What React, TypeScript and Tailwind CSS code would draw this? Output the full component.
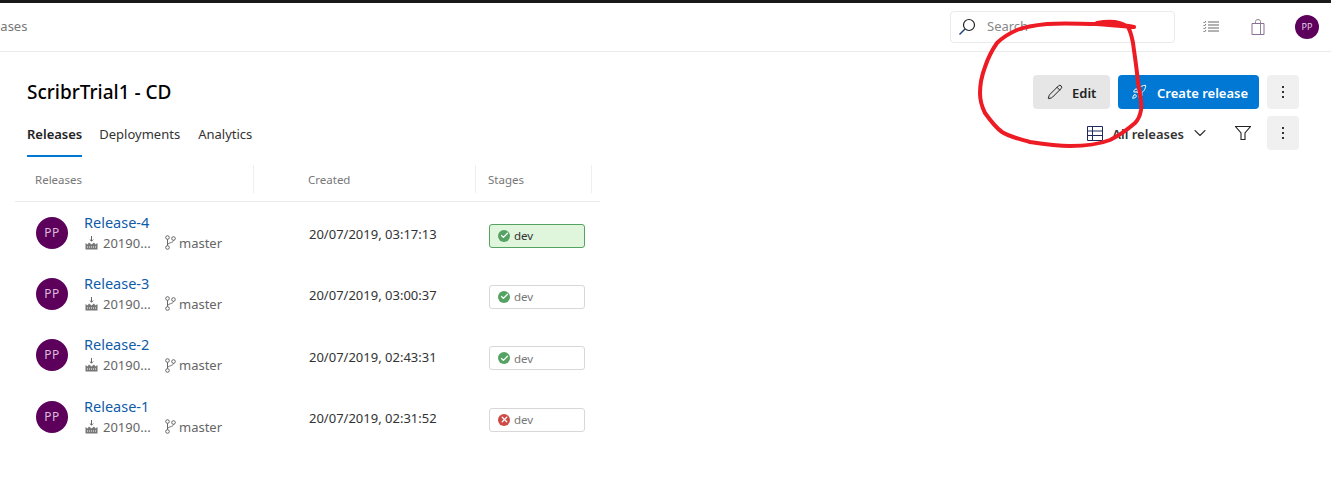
import { Check, ChevronDown, Pencil, Rocket, X } from 'lucide-react';

interface Release {
  name: string;
  created: string;
  failed?: boolean;
  selected?: boolean;
}

const releases: Release[] = [
  { name: 'Release-4', created: '20/07/2019, 03:17:13', selected: true },
  { name: 'Release-3', created: '20/07/2019, 03:00:37' },
  { name: 'Release-2', created: '20/07/2019, 02:43:31' },
  { name: 'Release-1', created: '20/07/2019, 02:31:52', failed: true },
];

function Avatar({ small }: { small?: boolean }) {
  return (
    <div
      className={
        small
          ? 'flex h-6 w-6 items-center justify-center rounded-full bg-[#5c005c] text-[9px] text-[#e6cfe6]'
          : 'flex h-8 w-8 shrink-0 items-center justify-center rounded-full bg-[#5c005c] text-[12px] tracking-[0.5px] text-[#d9bdd9]'
      }
    >
      PP
    </div>
  );
}

function Kebab() {
  return (
    <button className="flex h-[34px] w-8 flex-col items-center justify-center gap-[3px] rounded-sm bg-[#f0f0f0]">
      <span className="h-[2px] w-[2px] bg-[#333]" />
      <span className="h-[2px] w-[2px] bg-[#333]" />
      <span className="h-[2px] w-[2px] bg-[#333]" />
    </button>
  );
}

function BuildIcon() {
  return (
    <svg width="13" height="14" viewBox="0 0 13 14" className="shrink-0">
      <path d="M6.500 0v5M4.800 3.500l1.700 1.700 1.700-1.700" fill="none" stroke="#666" strokeWidth="1" />
      <path d="M0.500 13.500V7l2 1.500L4 6.500l2.500 2L9 6.500l1.500 2 2-1.500v6.500z" fill="#777" />
      <path d="M2 11h9" stroke="#fff" strokeWidth="1.200" strokeDasharray="1 1" />
    </svg>
  );
}

function BranchIcon() {
  return (
    <svg width="11" height="15" viewBox="0 0 11 15" fill="none" stroke="#666" strokeWidth="1" className="shrink-0">
      <circle cx="2.500" cy="2.500" r="1.800" />
      <circle cx="2.500" cy="12.500" r="1.800" />
      <circle cx="8.500" cy="3.500" r="1.800" />
      <path d="M2.500 4.300v6.400M8.500 5.300C8.500 8 2.500 7.500 2.500 10" />
    </svg>
  );
}

function Row({ release }: { release: Release }) {
  return (
    <div className="grid h-[61.33px] grid-cols-[239px_222px_124px] items-center">
      <div className="flex items-center pl-[21px]">
        <Avatar />
        <div className="ml-4 min-w-0">
          <div className="text-[14.500px] leading-[20px] text-[#0f5ca8]">{release.name}</div>
          <div className="flex items-center text-[13px] leading-[22px] text-[#666]">
            <span className="ml-px">
              <BuildIcon />
            </span>
            <span className="ml-[5px] w-[62px]">20190...</span>
            <BranchIcon />
            <span className="ml-[3px]">master</span>
          </div>
        </div>
      </div>
      <div className="pl-[55px] pt-[4px] text-[13px] text-[#333]">{release.created}</div>
      <div className="pl-[13px] pt-[6px]">
        <div
          className={
            release.selected
              ? 'flex h-6 w-24 items-center rounded-[3px] border border-[#55a362] bg-[#dff6dd] pl-[8px] text-[11.500px] text-[#333]'
              : 'flex h-6 w-24 items-center rounded-[3px] border border-[#d8d8d8] bg-white pl-[8px] text-[11.500px] text-[#777]'
          }
        >
          {release.failed ? (
            <span className="flex h-3 w-3 items-center justify-center rounded-full bg-[#cd4a45]">
              <X size={9} strokeWidth={3.500} className="text-white" />
            </span>
          ) : (
            <span className="flex h-3 w-3 items-center justify-center rounded-full bg-[#55a362]">
              <Check size={9} strokeWidth={3.500} className="text-white" />
            </span>
          )}
          <span className="ml-[4px]">dev</span>
        </div>
      </div>
    </div>
  );
}

export default function App() {
  return (
    <div className="relative h-[478px] w-[1331px] overflow-hidden bg-white font-['Noto_Sans','Liberation_Sans',sans-serif]">
      <div className="h-[3px] bg-[#1a1a1a]" />

      {/* top bar */}
      <div className="flex h-[49px] items-center justify-between border-b border-[#eaeaea] pr-3">
        <span className="-ml-[7px] text-[13px] text-[#777]">eases</span>
        <div className="flex items-center">
          <div className="flex h-8 w-[225px] items-center rounded-sm border border-[#eaeaea] pl-[7px] text-[13px] text-[#888]">
            <svg width="18" height="18" viewBox="0 0 18 18">
              <circle cx="11" cy="7" r="5.500" fill="none" stroke="#222" strokeWidth="1.200" />
              <path d="M7 11l-5.500 5.500" stroke="#1c3f7a" strokeWidth="1.500" />
            </svg>
            <span className="ml-[11px]">Search</span>
          </div>
          <svg width="16" height="14" viewBox="0 0 16 14" className="ml-[28px]">
            <path d="M5 2h11M5 5h11M5 8h11M5 11h11" stroke="#666" strokeWidth="1" />
            <path d="M0.500 2l1 1 1.500-2M0.500 5l1 1 1.500-2M0.500 8l1 1 1.500-2M0.500 11l1 1 1.500-2" fill="none" stroke="#777" strokeWidth="1" />
          </svg>
          <svg width="14" height="16" viewBox="0 0 14 16" className="ml-[32px]">
            <path d="M1 4.500h12V15.500H1z" fill="none" stroke="#8a6d9a" strokeWidth="1" />
            <path d="M4.500 4.500V2.500a2.500 2 0 0 1 5 0v2M9.500 4.500v11" fill="none" stroke="#888" strokeWidth="1" />
          </svg>
          <div className="ml-[30px]">
            <Avatar small />
          </div>
        </div>
      </div>

      {/* title + actions */}
      <div className="flex items-start justify-between pl-[27px] pr-8 pt-[23px]">
        <h1 className="pt-[3px] text-[19px] font-medium leading-[28px] text-black">ScribrTrial1 - CD</h1>
        <div className="flex gap-2">
          <button className="flex h-[34px] w-[77px] items-center rounded-sm bg-[#e6e6e6] pl-[14px] text-[13px] font-semibold text-[#222]">
            <Pencil size={16} strokeWidth={1.500} />
            <span className="ml-[9px] pt-[3px]">Edit</span>
          </button>
          <button className="flex h-[34px] w-[141px] items-center rounded-sm bg-[#0078d4] pl-[13px] text-[13px] font-semibold text-white">
            <Rocket size={16} strokeWidth={1.500} />
            <span className="ml-[10px] pt-[3px]">Create release</span>
          </button>
          <Kebab />
        </div>
      </div>

      {/* tabs + view options */}
      <div className="mt-[7px] flex items-start justify-between pl-[27px] pr-8">
        <div className="flex gap-[17px] text-[13px] text-[#333]">
          <div className="h-[41px] border-b-2 border-[#0078d4] pt-[8px] leading-[20px] font-semibold text-[#222]">Releases</div>
          <div className="pt-[8px] leading-[20px]">Deployments</div>
          <div className="ml-px pt-[8px] leading-[20px]">Analytics</div>
        </div>
        <div className="flex h-[34px] items-center text-[13px] font-semibold text-[#333]">
          <svg width="16" height="15" viewBox="0 0 16 15">
            <path d="M0.500 0.500h15v14h-15zM0.500 5h15M0.500 9.500h15M5.500 0.500v14" fill="none" stroke="#1c2a5c" strokeWidth="1" />
          </svg>
          <span className="ml-[9px] pt-[3px]">All releases</span>
          <ChevronDown size={20} strokeWidth={1.300} className="ml-[6px]" />
          <svg width="16" height="14" viewBox="0 0 16 14" className="ml-[25px]">
            <path d="M0.500 0.500h15L10 7v6.500H6V7z" fill="none" stroke="#222" strokeWidth="1.100" />
          </svg>
          <div className="ml-4">
            <Kebab />
          </div>
        </div>
      </div>

      {/* releases table */}
      <div className="ml-[15px] w-[585px]">
        <div className="grid h-[45px] grid-cols-[239px_222px_124px] items-center border-b border-[#eaeaea] text-[11.500px] text-[#777]">
          <div className="flex h-7 items-center border-r border-[#eeeeee] pl-5 pt-px">Releases</div>
          <div className="flex h-7 items-center border-r border-[#eeeeee] pl-[54px] pt-px">Created</div>
          <div className="mr-2 flex h-7 items-center border-r border-[#eeeeee] pl-3 pt-px">Stages</div>
        </div>
        <div>
          {releases.map((release) => (
            <Row key={release.name} release={release} />
          ))}
        </div>
      </div>

      {/* red marker annotation drawn over the page */}
      <svg width="1331" height="478" viewBox="0 0 1331 478" className="pointer-events-none absolute left-0 top-0">
        <path
          d="M1134 27C1120 24 1105 24 1097 23C1108 21 1120 21 1128 27C1131 32 1132 38 1133 43C1135 58 1137 70 1138 83C1140 93 1142 102 1141 110C1140 116 1138 120 1135 123C1127 130 1118 136 1110 140C1097 145 1083 146 1070 146C1056 146 1043 144 1030 142C1020 139 1010 137 1002 132C995 127 990 120 985 113C982 107 980 100 980 93C980 83 982 75 985 67C988 58 992 50 997 43C1003 37 1010 33 1017 30C1027 26 1037 25 1047 24C1065 23 1080 24 1097 24L1133 27"
          fill="none"
          stroke="#ed1c24"
          strokeWidth="4"
          strokeLinecap="round"
          strokeLinejoin="round"
        />
      </svg>
    </div>
  );
}
